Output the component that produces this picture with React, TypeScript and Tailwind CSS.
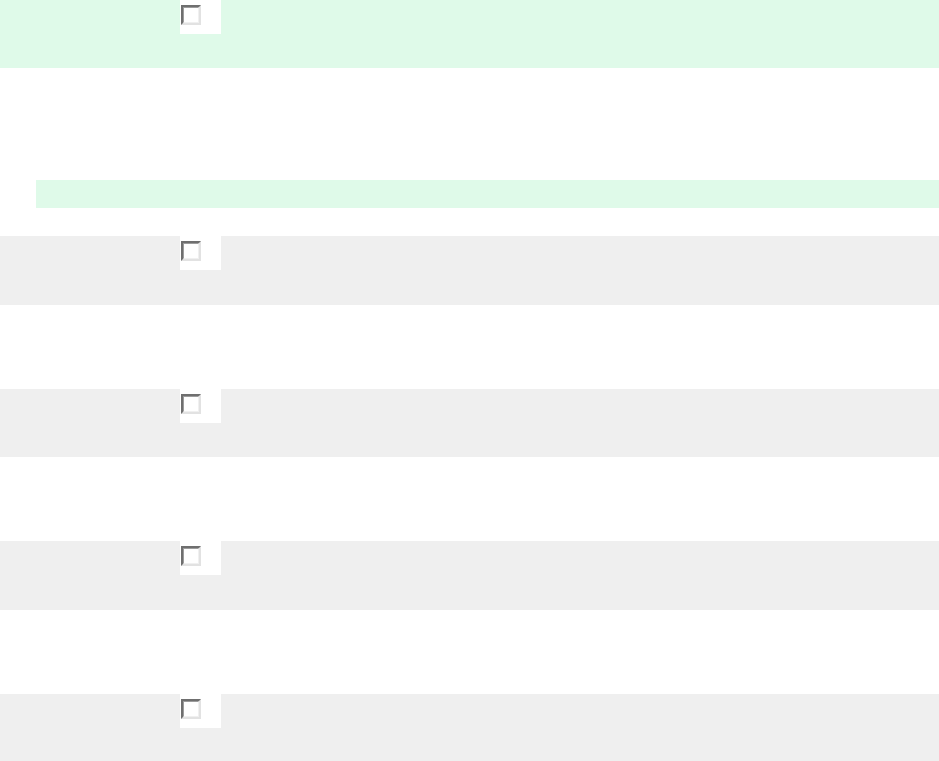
function Check() {
  return (
    <div className="w-[41px] h-[34px] bg-white pl-px pt-[5px]">
      <div className="w-5 h-5 border-2 border-t-[#6f6f6f] border-l-[#6f6f6f] border-b-[#e2e2e2] border-r-[#e2e2e2]">
        <div className="w-full h-full border border-t-[#9c9c9c] border-l-[#9c9c9c] border-b-[#f0f0f0] border-r-[#f0f0f0] bg-white" />
      </div>
    </div>
  );
}

function Row({ tone, first }: { tone: "green" | "gray"; first?: boolean }) {
  return (
    <div
      className={
        (first ? "h-[68px] " : "h-[68.5px] ") +
        "pl-[180px] " +
        (tone === "green" ? "bg-[#dffae9]" : "bg-[#efefef]")
      }
    >
      <Check />
    </div>
  );
}

export default function App() {
  return (
    <div className="w-[939px] h-[761px] bg-white overflow-hidden font-['Liberation_Sans',sans-serif]">
      <Row tone="green" first />
      <div className="h-[28px] mt-[112px] ml-[36px] bg-[#dffae9]" />
      <div className="mt-[28px] flex flex-col gap-[84px]">
        <Row tone="gray" />
        <Row tone="gray" />
        <Row tone="gray" />
        <Row tone="gray" />
      </div>
    </div>
  );
}
